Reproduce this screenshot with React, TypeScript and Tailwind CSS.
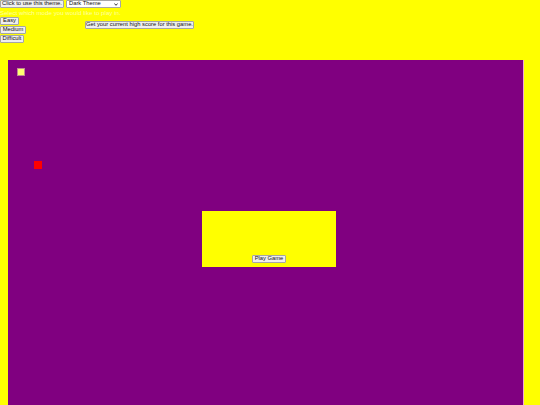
import React from "react";

const btn =
  "h-[8px] px-[2px] bg-[#efefef] border border-[#a6a6a6] rounded-[1px] text-[5.8px] leading-none text-[#111] whitespace-nowrap flex items-center";

const App = () => {
  return (
    <div className="h-[405px] w-[540px] overflow-hidden bg-[#ffff00] font-['Liberation_Sans',Arial,sans-serif]">
      <div className="flex items-start gap-[2px] h-[8px]">
        <button className={btn + " w-[64px] justify-center"}>Click to use this theme.</button>
        <div className="relative h-[8px] w-[55px]">
          <select
            defaultValue="dark"
            className="block h-[8px] w-[55px] appearance-none bg-white border border-[#a6a6a6] rounded-[1px] py-0 pl-[2px] text-[5.8px] leading-none text-[#111] outline-none"
          >
            <option value="dark">Dark Theme</option>
            <option value="light">Light Theme</option>
          </select>
          <svg
            className="absolute right-[3px] top-[2.5px] pointer-events-none"
            width="4"
            height="3"
            viewBox="0 0 4 3"
          >
            <path d="M0.4 0.5 L2 2.3 L3.6 0.5" fill="none" stroke="black" strokeWidth="0.8" />
          </svg>
        </div>
      </div>
      <p className="mt-[2px] h-[6px] text-[6.2px] leading-[6px] text-[#ffffa0]">
        Select which mode you would like to play in.
      </p>
      <div className="flex">
        <div className="flex flex-col gap-[1px] mt-[1px]">
          <div className="flex">
            <button className={btn + " w-[19px] justify-center"}>Easy</button>
          </div>
          <div className="flex">
            <button className={btn + " w-[26px] justify-center"}>Medium</button>
          </div>
          <div className="flex">
            <button className={btn + " w-[24px] justify-center"}>Difficult</button>
          </div>
        </div>
        <div className="ml-[59px] mt-[5px]">
          <button className={btn + " w-[109px] justify-center"}>
            Get your current high score for this game.
          </button>
        </div>
      </div>
      <div className="relative ml-[8px] mt-[17px] h-[345px] w-[516px] bg-[#800080] border-r border-[#f2a6d6]">
        <div className="absolute left-[9px] top-[8px] h-[8px] w-[8px] bg-[#ffff70] border border-[#c08a90]" />
        <div className="absolute left-[26px] top-[101px] h-[8px] w-[8px] bg-[#ff0000]" />
        <div className="absolute left-[194px] top-[151px] h-[56px] w-[134px] bg-[#ffff00] flex flex-col items-center justify-end pb-[4px]">
          <button className={btn + " w-[34px] justify-center"}>Play Game</button>
        </div>
      </div>
    </div>
  );
};

export default App;
